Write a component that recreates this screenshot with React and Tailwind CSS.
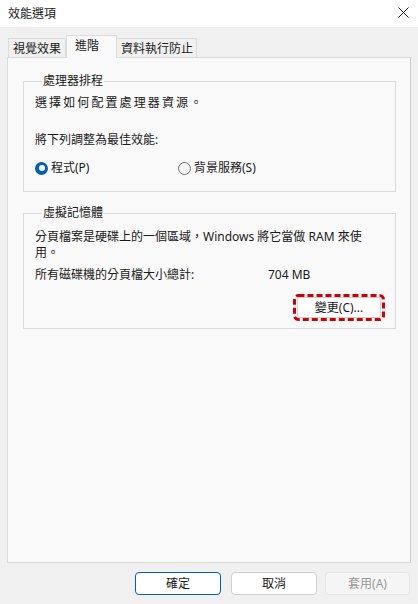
import React from "react";

function Radio({ checked, label }) {
  return (
    <div className="flex items-center">
      {checked ? (
        <span className="w-[13px] h-[13px] rounded-full bg-[#005fb8] flex items-center justify-center">
          <span className="w-[6px] h-[6px] rounded-full bg-white" />
        </span>
      ) : (
        <span className="w-[13px] h-[13px] rounded-full border border-[#6e6e6e] bg-[#f5f5f5]" />
      )}
      <span className="ml-[3px]">{label}</span>
    </div>
  );
}

export default function App() {
  return (
    <div
      className="w-[418px] h-[604px] flex flex-col text-[12px] leading-[16px] text-[#1a1a1a] overflow-hidden"
      style={{ fontFamily: '"Noto Sans", "Noto Sans CJK TC", sans-serif' }}
    >
      {/* Title bar */}
      <div className="h-[27px] bg-white flex items-center justify-between pl-[8px] pr-[9px] shrink-0">
        <span>效能選項</span>
        <svg width="11" height="11" viewBox="0 0 11 11" className="mt-[-2px]">
          <path d="M0.5 0.5 L10.5 10.5 M10.5 0.5 L0.5 10.5" stroke="#1a1a1a" strokeWidth="1" fill="none" />
        </svg>
      </div>

      {/* Body */}
      <div className="flex-1 bg-[#f0f0f0] flex flex-col px-[7px] pt-[8px] pb-[9px]">
        {/* Tabs */}
        <div className="flex items-end h-[22px] pl-[1px] relative z-10">
          <div className="w-[58px] h-[19px] border border-b-0 border-[#dcdcdc] bg-[#f0f0f0] flex items-center justify-center pt-[1px]">
            視覺效果
          </div>
          <div className="w-[51px] h-[23px] -mb-px border border-b-0 border-[#dcdcdc] bg-[#f9f9f9] flex items-center pl-[8px] pb-[2px]">
            進階
          </div>
          <div className="w-[80px] h-[19px] border border-b-0 border-l-0 border-[#dcdcdc] bg-[#f0f0f0] flex items-center pl-[4px] pt-[1px]">
            資料執行防止
          </div>
        </div>

        {/* Panel */}
        <div className="flex-1 bg-[#f9f9f9] border border-[#dcdcdc] border-r-[#d0d0d0] pl-[15px] pt-[15px]">
          <fieldset className="w-[373px] border border-[#dcdcdc] pl-[11px] pb-[15px]">
            <legend className="ml-[7px] px-[1px]">處理器排程</legend>
            <div className="mt-[6px] tracking-[2.1px]">選擇如何配置處理器資源。</div>
            <div className="mt-[21px]">將下列調整為最佳效能:</div>
            <div className="mt-[12px] flex">
              <div className="w-[143px]">
                <Radio checked label="程式(P)" />
              </div>
              <Radio label="背景服務(S)" />
            </div>
          </fieldset>

          <fieldset className="mt-[13px] w-[373px] border border-[#dcdcdc] pl-[11px] pr-[14px] pb-[10px]">
            <legend className="ml-[7px] px-[1px]">虛擬記憶體</legend>
            <div className="mt-[8px]">分頁檔案是硬碟上的一個區域，Windows 將它當做 RAM 來使</div>
            <div>用。</div>
            <div className="mt-[6px] flex">
              <span className="w-[233px]">所有磁碟機的分頁檔大小總計:</span>
              <span>704 MB</span>
            </div>
            <div className="mt-[14px] flex justify-end">
              <div className="relative">
                <button className="w-[84px] h-[21px] bg-white border border-[#d0d0d0] rounded-[3px] flex items-center justify-center">
                  變更(C)...
                </button>
                <svg
                  className="absolute left-[-4px] top-[-3px] pointer-events-none"
                  width="92"
                  height="27"
                  viewBox="0 0 92 27"
                >
                  <rect
                    x="1.5"
                    y="1.5"
                    width="89"
                    height="24"
                    rx="4"
                    fill="none"
                    stroke="#d00000"
                    strokeWidth="3"
                    strokeDasharray="6 3"
                  />
                </svg>
              </div>
            </div>
          </fieldset>
        </div>

        {/* Buttons */}
        <div className="mt-[9px] flex justify-end pr-[1px]">
          <button className="w-[86px] h-[23px] bg-white border border-[#005fb8] rounded-[4px] flex items-center justify-center">
            確定
          </button>
          <button className="ml-[10px] w-[86px] h-[23px] bg-white border border-[#d0d0d0] rounded-[4px] flex items-center justify-center">
            取消
          </button>
          <button className="ml-[8px] w-[85px] h-[23px] bg-[#f5f5f5] border border-[#e5e5e5] rounded-[4px] flex items-center justify-center text-[#9a9a9a]">
            套用(A)
          </button>
        </div>
      </div>
    </div>
  );
}
